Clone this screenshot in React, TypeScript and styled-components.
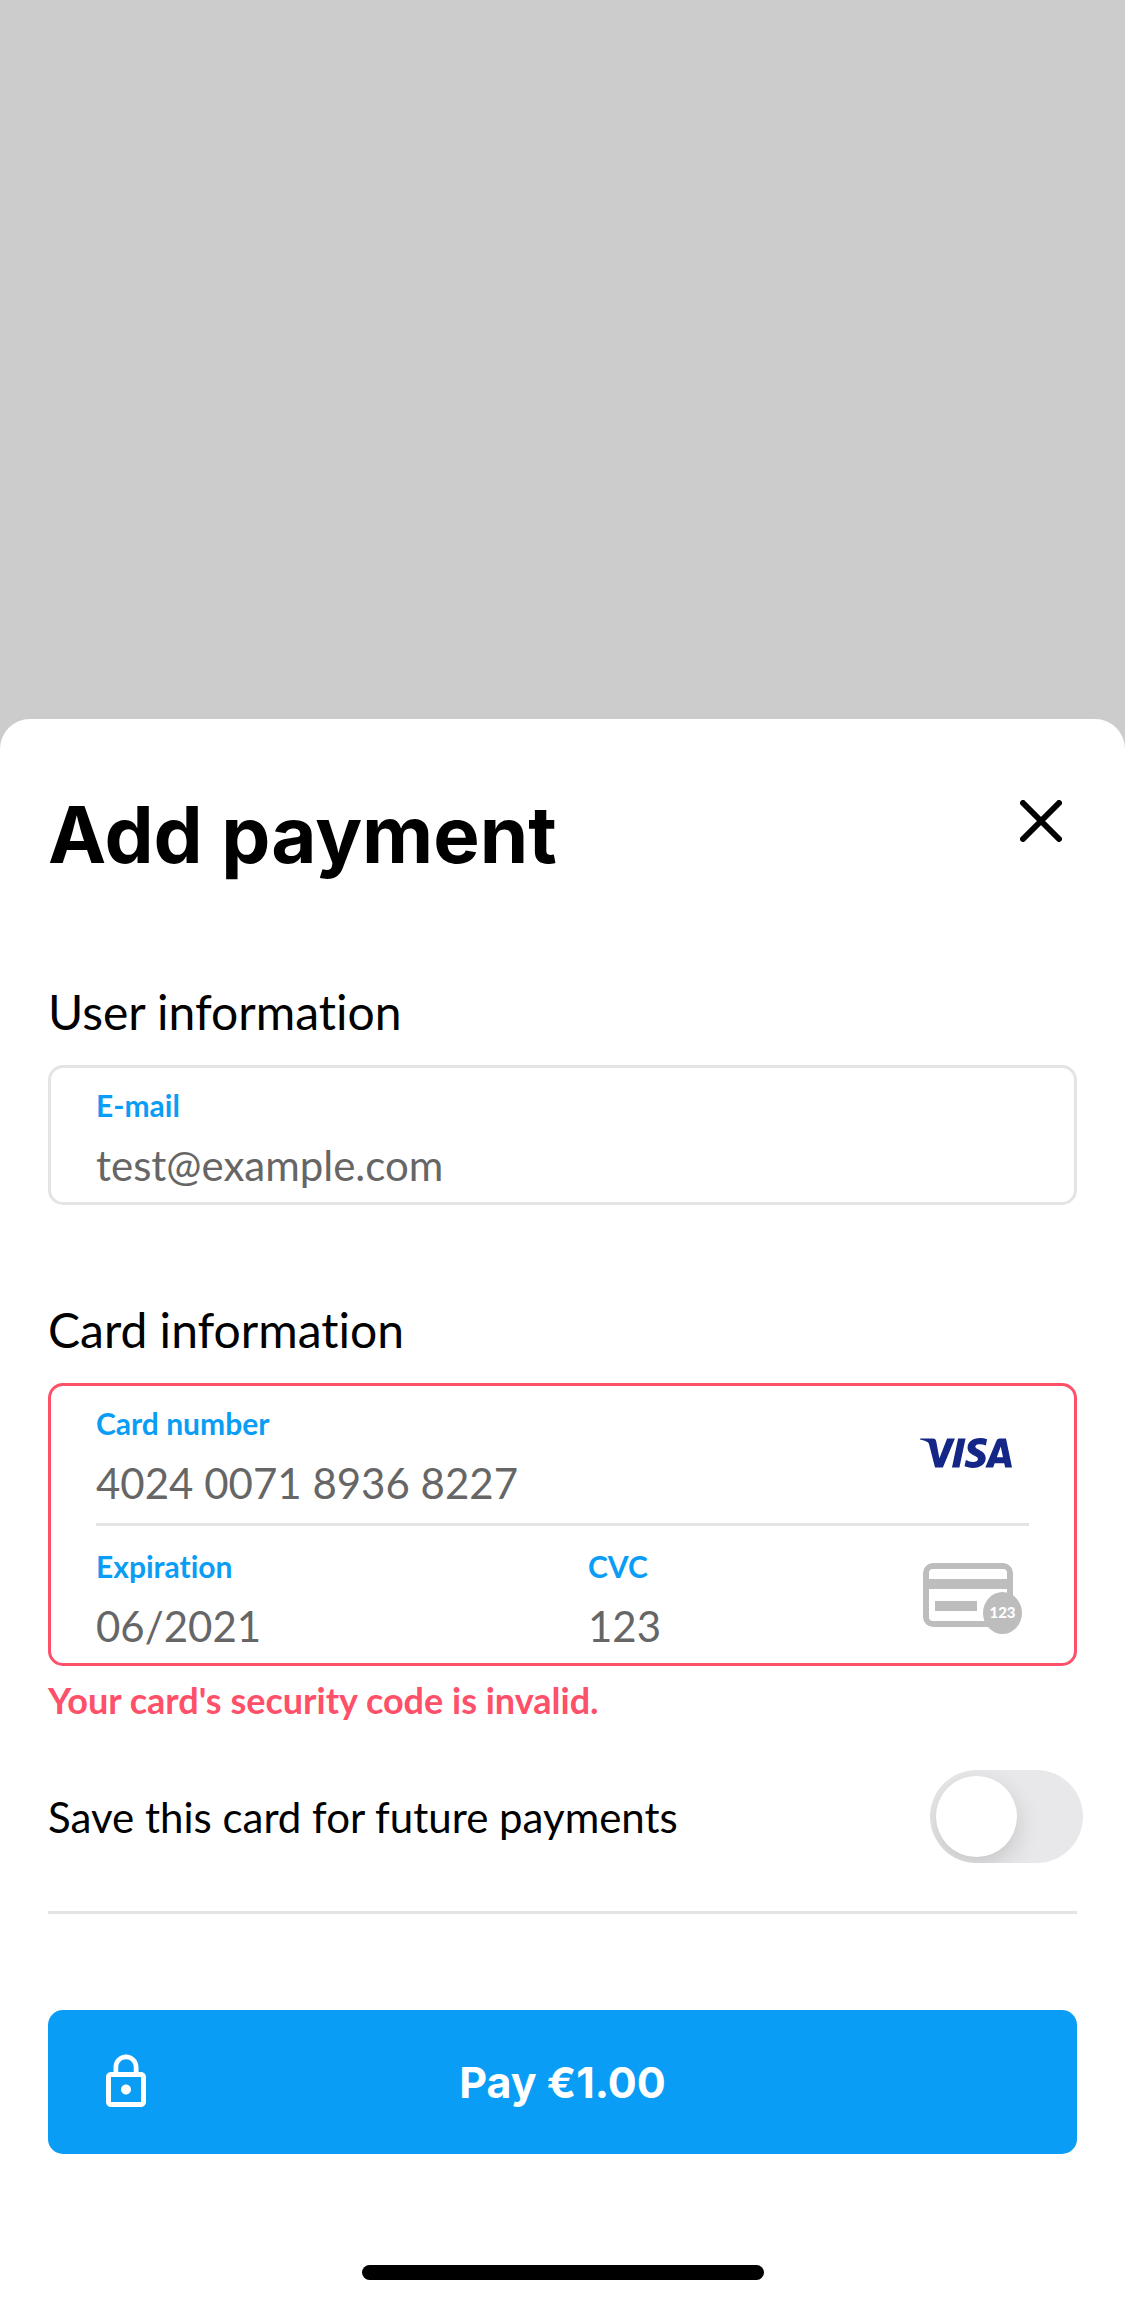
import React, { useState } from 'react';
import styled, { createGlobalStyle } from 'styled-components';
import { SiVisa } from 'react-icons/si';
import { MdLockOutline } from 'react-icons/md';

const color = {
  backdrop: '#cccccc',
  accent: '#0a9df5',
  danger: '#ff5069',
  line: '#e4e4e4',
  value: '#666666',
  icon: '#bdbdbd',
  visa: '#142787',
};

const GlobalStyle = createGlobalStyle`
  *, *::before { box-sizing: border-box; }
  body {
    margin: 0;
    background: ${color.backdrop};
    font-family: Lato, "Open Sans", sans-serif;
    font-variant-ligatures: none;
    color: #000;
  }
`;

const Screen = styled.div`
  display: flex;
  flex-direction: column;
  justify-content: flex-end;
  min-height: 100vh;
`;

const Sheet = styled.form`
  display: flex;
  flex-direction: column;
  padding: 72px 48px 24px;
  border-radius: 30px 30px 0 0;
  background: #fff;
`;

const Header = styled.header`
  display: flex;
  justify-content: space-between;
  align-items: flex-start;
  margin-bottom: 104px;
`;

const Title = styled.h1`
  margin: 0;
  font: 700 78px/88px Inter, sans-serif;
`;

const CloseButton = styled.button`
  display: flex;
  padding: 9px 15px;
  border: 0;
  background: none;
  color: inherit;
  cursor: pointer;
`;

const Section = styled.section`
  display: flex;
  flex-direction: column;

  & + & {
    margin-top: 96px;
  }
`;

const SectionTitle = styled.h2`
  margin: 0 0 24px;
  font-size: 48px;
  font-weight: 400;
  line-height: 58px;
`;

const FieldBox = styled.div<{ $invalid?: boolean }>`
  padding: 0 45px;
  border: 3px solid ${(p) => (p.$invalid ? color.danger : color.line)};
  border-radius: 15px;
`;

const FieldRow = styled.div`
  display: flex;
  align-items: center;
`;

const FieldPair = styled.div`
  display: grid;
  grid-template-columns: 1fr 1fr;
  column-gap: 51px;
`;

const FieldGroup = styled.div`
  display: flex;
  flex: 1;
  flex-direction: column;
  gap: 17px;
  min-width: 0;
  padding: 19px 0 12px;
`;

const FieldLabel = styled.label`
  color: ${color.accent};
  font-size: 30px;
  font-weight: 700;
  line-height: 36px;
`;

const FieldInput = styled.input`
  width: 100%;
  height: 50px;
  padding: 0;
  border: 0;
  outline: 0;
  background: none;
  color: ${color.value};
  font: 400 42px/50px Lato, "Open Sans", sans-serif;
`;

const RowDivider = styled.hr`
  width: 100%;
  height: 3px;
  margin: 3px 0;
  border: 0;
  background: ${color.line};
`;

const VisaLogo = styled(SiVisa)`
  width: 92px;
  height: 30px;
  margin-right: 17px;
  color: ${color.visa};
`;

const CvcIcon = styled.svg`
  flex: none;
  width: 100px;
  height: 78px;
  margin-right: 6px;
`;

const ErrorText = styled.p`
  margin: 12px 0 48px;
  color: ${color.danger};
  font-size: 36px;
  font-weight: 700;
  line-height: 44px;
`;

const SaveRow = styled.div`
  display: flex;
  justify-content: space-between;
  align-items: center;
  margin-right: -6px;
`;

const SaveLabel = styled.label`
  font-size: 42px;
  line-height: 50px;
`;

const Toggle = styled.input`
  flex: none;
  width: 153px;
  height: 93px;
  margin: 0;
  padding: 6px;
  overflow: hidden;
  appearance: none;
  border-radius: 47px;
  background: #e8e8ea;
  cursor: pointer;

  &::before {
    content: '';
    display: block;
    width: 81px;
    height: 81px;
    border-radius: 50%;
    background: #fff;
    box-shadow: 0 9px 24px rgba(0, 0, 0, 0.15);
  }

  &:checked {
    background: ${color.accent};
  }

  &:checked::before {
    margin-left: auto;
  }
`;

const Divider = styled.hr`
  width: 100%;
  height: 3px;
  margin: 48px 0 96px;
  border: 0;
  background: ${color.line};
`;

const PayButton = styled.button`
  display: grid;
  grid-template-columns: 60px 1fr 60px;
  align-items: center;
  height: 144px;
  padding: 0 48px;
  border: 0;
  border-radius: 15px;
  background: ${color.accent};
  color: #fff;
  font: 700 43px/50px Inter, sans-serif;
  cursor: pointer;
`;

const HomeIndicator = styled.div`
  align-self: center;
  width: 402px;
  height: 15px;
  margin-top: 111px;
  border-radius: 8px;
  background: #000;
`;

type FieldProps = { id: string; label: string; initial: string; type?: string };

function Field({ id, label, initial, type = 'text' }: FieldProps) {
  const [value, setValue] = useState(initial);
  return (
    <FieldGroup>
      <FieldLabel htmlFor={id}>{label}</FieldLabel>
      <FieldInput id={id} type={type} value={value} onChange={(e) => setValue(e.target.value)} />
    </FieldGroup>
  );
}

export default function App() {
  const [save, setSave] = useState(false);

  return (
    <>
      <GlobalStyle />
      <Screen>
        <Sheet onSubmit={(e) => e.preventDefault()}>
          <Header>
            <Title>Add payment</Title>
            <CloseButton type="button" aria-label="Close">
              <svg width="42" height="42" viewBox="0 0 42 42" fill="none">
                <path d="M3 3 39 39M39 3 3 39" stroke="currentColor" strokeWidth="6" strokeLinecap="round" />
              </svg>
            </CloseButton>
          </Header>

          <Section>
            <SectionTitle>User information</SectionTitle>
            <FieldBox>
              <Field id="email" label="E-mail" type="email" initial="test@example.com" />
            </FieldBox>
          </Section>

          <Section>
            <SectionTitle>Card information</SectionTitle>
            <FieldBox $invalid>
              <FieldRow>
                <Field id="number" label="Card number" initial="4024 0071 8936 8227" />
                <VisaLogo viewBox="0 8.1 24 7.8" preserveAspectRatio="none" aria-label="Visa" />
              </FieldRow>
              <RowDivider />
              <FieldPair>
                <Field id="expiration" label="Expiration" initial="06/2021" />
                <FieldRow>
                  <Field id="cvc" label="CVC" initial="123" />
                  <CvcIcon viewBox="0 -6 100 78" aria-hidden="true">
                    <rect x="3" y="3" width="84" height="58" rx="7" fill="none" stroke={color.icon} strokeWidth="6" />
                    <path d="M3 16H87V26H3ZM12 38H54V48H12Z" fill={color.icon} />
                    <ellipse cx="79.5" cy="50" rx="19.5" ry="21" fill={color.icon} />
                    <text x="79.5" y="55" textAnchor="middle" fontSize="15" fontWeight="900" fill="#fff">
                      123
                    </text>
                  </CvcIcon>
                </FieldRow>
              </FieldPair>
            </FieldBox>
            <ErrorText role="alert">Your card's security code is invalid.</ErrorText>
          </Section>

          <SaveRow>
            <SaveLabel htmlFor="save">Save this card for future payments</SaveLabel>
            <Toggle
              id="save"
              type="checkbox"
              role="switch"
              checked={save}
              onChange={(e) => setSave(e.target.checked)}
            />
          </SaveRow>
          <Divider />

          <PayButton type="submit">
            <MdLockOutline size={60} />
            <span>Pay €1.00</span>
          </PayButton>
          <HomeIndicator />
        </Sheet>
      </Screen>
    </>
  );
}
